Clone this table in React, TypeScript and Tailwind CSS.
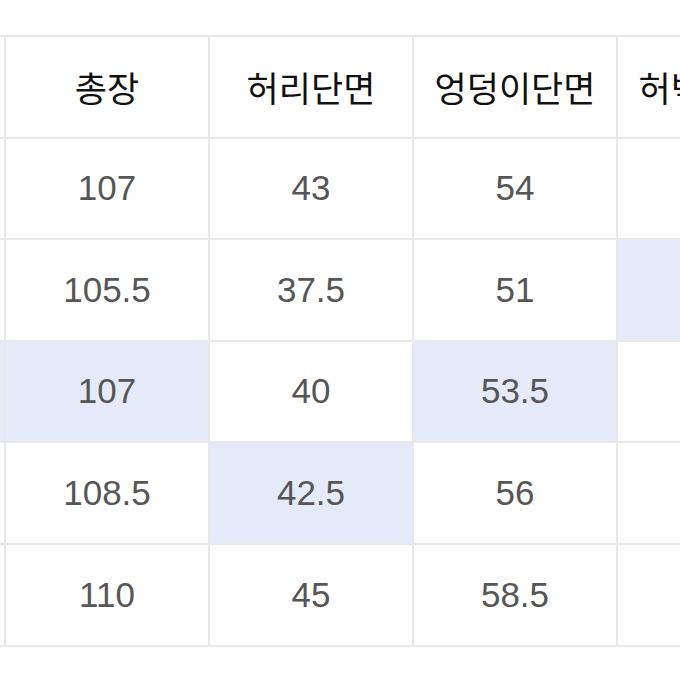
const header = ['사이즈', '총장', '허리단면', '엉덩이단면', '허벅지단면'];

// each row: size, then measurements; hl marks highlighted columns
const rows: { cells: string[]; hl: number[] }[] = [
  { cells: ['S', '107', '43', '54', '33'], hl: [] },
  { cells: ['M', '105.5', '37.5', '51', '30.5'], hl: [4] },
  { cells: ['L', '107', '40', '53.5', '32'], hl: [0, 1, 3] },
  { cells: ['XL', '108.5', '42.5', '56', '34'], hl: [2] },
  { cells: ['XXL', '110', '45', '58.5', '35.5'], hl: [] },
];

export default function App() {
  return (
    <div className="w-[680px] h-[680px] overflow-hidden bg-white">
      <div className="mt-[35px] ml-[-200px] w-max p-[2px] bg-[#e8e8e8]">
        <div className="grid grid-cols-[repeat(5,202px)] gap-[2px]">
          {header.map((h) => (
            <div
              key={h}
              className="h-[99.6px] bg-white flex items-center justify-center text-[35px] font-normal text-[#111] font-['Noto_Sans_CJK_KR',sans-serif] whitespace-nowrap"
            >
              {h}
            </div>
          ))}
          {rows.map((r, ri) =>
            r.cells.map((c, ci) => (
              <div
                key={`${ri}-${ci}`}
                className={`h-[99.6px] flex items-center justify-center text-[35px] text-[#565656] font-['Liberation_Sans',Arial,sans-serif] ${
                  r.hl.includes(ci) ? 'bg-[#e5eaf9]' : 'bg-white'
                }`}
              >
                {c}
              </div>
            ))
          )}
        </div>
      </div>
    </div>
  );
}
